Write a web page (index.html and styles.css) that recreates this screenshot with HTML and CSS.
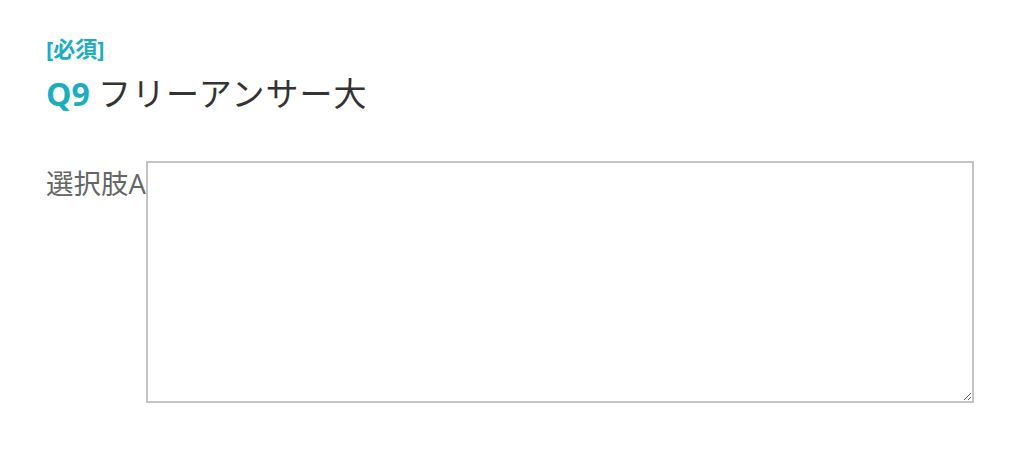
FILE: index.html
```html
<!DOCTYPE html>
<html lang="ja">
    <head>
        <meta charset="UTF-8">
        <title>Q9</title>
        <link rel="stylesheet" href="styles.css">
    </head>
    <body>
        <div class="question">
            <div class="required">[必須]</div>
            <h2 class="question-title"><span class="qnum">Q9</span> <span class="qtext">フリーアンサー大</span></h2>
            <div class="answer-row">
                <label class="choice-label" for="answer-a">選択肢A</label>
                <textarea id="answer-a" class="answer-box"></textarea>
            </div>
        </div>
    </body>
</html>
```

FILE: styles.css
```css
body, html {
    margin: 0;
    background: #fff;
    font-family: "Open Sans", "Noto Sans CJK JP", sans-serif;
}
.question {
    padding: 33px 46px 0 46px;
}
.required {
    color: #1aaebf;
    font-weight: bold;
    font-size: 22px;
    line-height: 30px;
}
.question-title {
    margin: 10px 0 0 0;
    font-size: 32px;
    font-weight: normal;
    line-height: 42px;
    color: #333;
}
.qnum {
    color: #1aaebf;
    font-weight: bold;
}
.qtext {
    font-size: 33px;
    letter-spacing: 1px;
}
.answer-row {
    display: flex;
    align-items: flex-start;
    margin-top: 46px;
}
.choice-label {
    color: #666;
    font-size: 27.5px;
    line-height: 46px;
}
.answer-box {
    width: 828px;
    height: 242px;
    box-sizing: border-box;
    margin: 0;
    border: 2px solid #c4c4c4;
    resize: both;
}
```
